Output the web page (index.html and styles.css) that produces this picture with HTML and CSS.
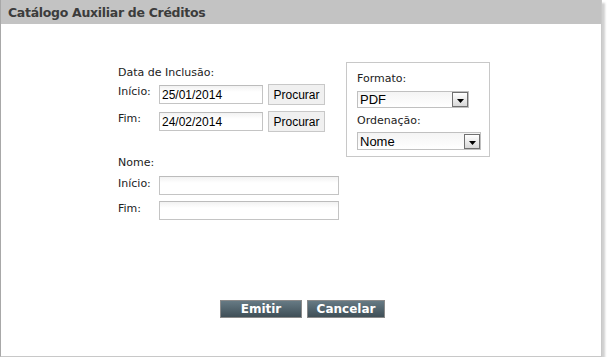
FILE: index.html
```html
<!DOCTYPE html>
<html lang="pt">
<head>
<meta charset="utf-8">
<title>Catálogo Auxiliar de Créditos</title>
<link rel="stylesheet" href="styles.css">
</head>
<body>
<div class="panel">
  <div class="panel-header">Catálogo Auxiliar de Créditos</div>
  <div class="panel-body">
    <div class="form-row">
      <div class="left-col">
        <div class="group-label">Data de Inclusão:</div>
        <div class="field-row date-row">
          <span class="field-label">Início:</span>
          <input class="text-input date-input" type="text" value="25/01/2014">
          <button class="search-btn" type="button">Procurar</button>
        </div>
        <div class="field-row date-row">
          <span class="field-label">Fim:</span>
          <input class="text-input date-input" type="text" value="24/02/2014">
          <button class="search-btn" type="button">Procurar</button>
        </div>
        <div class="group-label name-label">Nome:</div>
        <div class="field-row name-row">
          <span class="field-label">Início:</span>
          <input class="text-input name-input" type="text" value="">
        </div>
        <div class="field-row name-row">
          <span class="field-label">Fim:</span>
          <input class="text-input name-input" type="text" value="">
        </div>
      </div>
      <div class="options-box">
        <div class="opt-label">Formato:</div>
        <div class="fake-select select-format">
          <span class="select-value">PDF</span>
          <span class="select-arrow"><svg width="7" height="4" viewBox="0 0 7 4"><path d="M0 0H7L3.5 4Z" fill="#000"/></svg></span>
        </div>
        <div class="opt-label opt-label-2">Ordenação:</div>
        <div class="fake-select select-order">
          <span class="select-value">Nome</span>
          <span class="select-arrow"><svg width="7" height="4" viewBox="0 0 7 4"><path d="M0 0H7L3.5 4Z" fill="#000"/></svg></span>
        </div>
      </div>
    </div>
    <div class="actions">
      <button class="action-btn btn-emit" type="button">Emitir</button>
      <button class="action-btn btn-cancel" type="button">Cancelar</button>
    </div>
  </div>
</div>
</body>
</html>
```

FILE: styles.css
```css
html, body {
  margin: 0;
  padding: 0;
  background: #fff;
}

body {
  font-family: "DejaVu Sans", Verdana, sans-serif;
  font-size: 11px;
  color: #222;
}

.panel {
  width: 600px;
  height: 356px;
  border-left: 1px solid #a8a8a8;
  border-right: 1px solid #c8c8c8;
  border-bottom: 1px solid #c8c8c8;
  box-shadow: 3px 3px 2px #d0d0d0;
  display: flex;
  flex-direction: column;
}

.panel-header {
  height: 24px;
  background: #c3c3c3;
  color: #3c3c3c;
  font-weight: bold;
  font-size: 12.5px;
  letter-spacing: -0.3px;
  line-height: 25px;
  padding-left: 7px;
}

.panel-body {
  flex: 1;
  padding-top: 38px;
  display: flex;
  flex-direction: column;
}

.form-row {
  display: flex;
  padding-left: 117px;
}

.left-col {
  width: 228px;
  display: flex;
  flex-direction: column;
}

.group-label {
  margin-top: 4px;
  height: 14px;
  line-height: 14px;
}

.field-row {
  display: flex;
  align-items: center;
}

.date-row {
  height: 21px;
  margin-top: 4px;
}

.date-row + .date-row {
  margin-top: 6px;
}

.field-label {
  width: 41px;
  align-self: flex-start;
  line-height: 14px;
  margin-top: 1px;
}

.text-input {
  box-sizing: border-box;
  margin: 0;
  border: 1px solid #c4c4c4;
  border-top-color: #bcbcbc;
  background: linear-gradient(#f2f2f2, #ffffff 6px);
  font-family: "Liberation Sans", Arial, sans-serif;
  font-size: 12px;
  color: #000;
  padding: 0 2px;
  outline: none;
}

.date-input {
  width: 104px;
  height: 19px;
}

.search-btn {
  box-sizing: border-box;
  margin: 0 0 0 5px;
  width: 57px;
  height: 21px;
  border: 1px solid #c8c8c8;
  background: #f0f0f0;
  font-family: "Liberation Sans", Arial, sans-serif;
  font-size: 12px;
  color: #000;
  padding: 0;
}

.name-label {
  margin-top: 24px;
}

.name-row {
  margin-top: 6px;
  height: 19px;
}

.name-row + .name-row {
  margin-top: 6px;
}

.name-row .field-label {
  margin-top: 1px;
}

.name-input {
  width: 180px;
  height: 19px;
}

.options-box {
  box-sizing: border-box;
  width: 144px;
  height: 95px;
  border: 1px solid #c8c8c8;
  padding: 9px 0 0 10px;
}

.opt-label {
  height: 14px;
  line-height: 14px;
}

.opt-label-2 {
  margin-top: 6px;
}

.fake-select {
  box-sizing: border-box;
  margin-top: 5px;
  height: 17px;
  border: 1px solid #c0c0c0;
  background: linear-gradient(#f4f4f4, #ffffff);
  display: flex;
  align-items: center;
  font-family: "Liberation Sans", Arial, sans-serif;
  font-size: 13px;
  color: #000;
}

.select-format {
  width: 112px;
}

.select-order {
  width: 124px;
  height: 18px;
  margin-top: 4px;
}

.select-value {
  flex: 1;
  padding-left: 2px;
  line-height: 15px;
}

.select-arrow {
  box-sizing: border-box;
  width: 16px;
  height: 15px;
  border: 1px solid #707070;
  background: linear-gradient(#ffffff, #d8d8d8);
  display: flex;
  align-items: center;
  justify-content: center;
  padding-top: 3px;
}

.actions {
  display: flex;
  justify-content: center;
  gap: 5px;
  margin-top: 80px;
  padding-left: 3px;
}

.action-btn {
  box-sizing: border-box;
  height: 18px;
  margin: 0;
  border: 1px solid #8a8a8a;
  background: linear-gradient(#667a84, #3f4f57);
  color: #fff;
  font-family: "DejaVu Sans", Verdana, sans-serif;
  font-weight: bold;
  font-size: 12px;
  line-height: 15px;
  padding: 0;
}

.btn-emit {
  width: 82px;
}

.btn-cancel {
  width: 78px;
}
```
